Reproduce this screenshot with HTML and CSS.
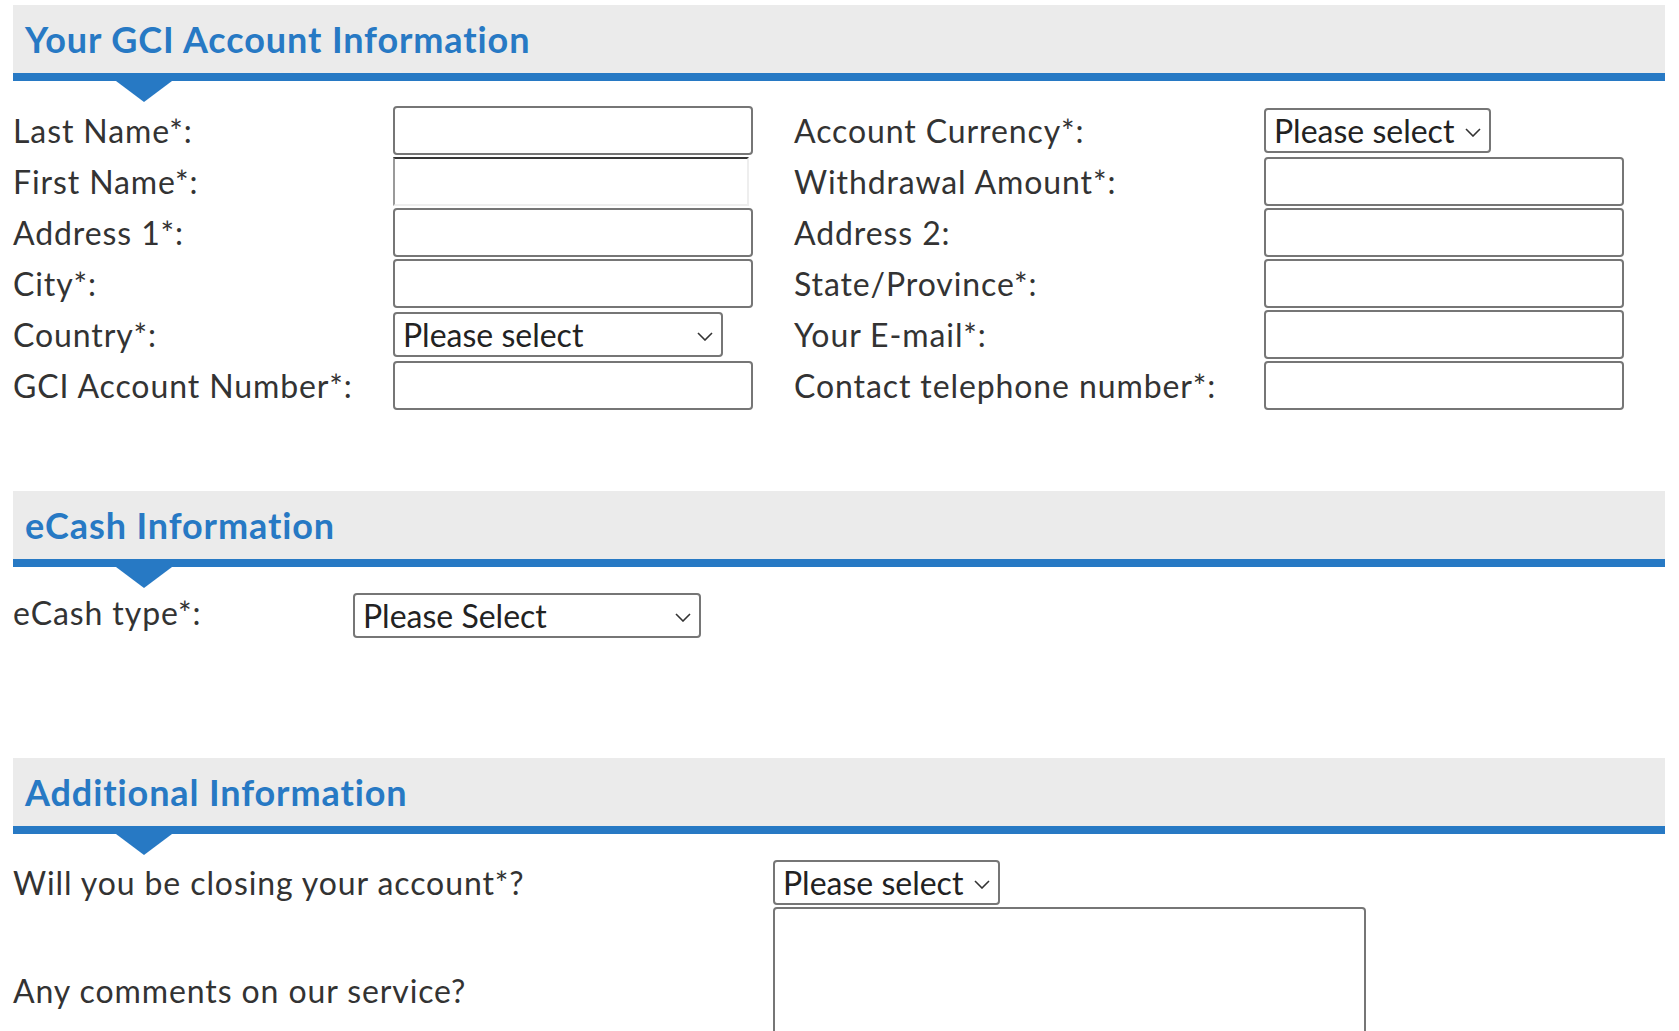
FILE: index.html
```html
<!DOCTYPE html>
<html lang="en">
<head>
    <meta charset="UTF-8">
    <meta name="viewport" content="width=device-width, initial-scale=1.0">
    <title>Withdrawal Form</title>
    <link rel="stylesheet" href="styles.css">
</head>
<body>
    <form class="withdraw-form">
        <section class="panel">
            <h2 class="panel-title">Your GCI Account Information</h2>
            <div class="form-grid account-grid">
                <label>Last Name*:</label>
                <input type="text" class="field">
                <label class="col-label">Account Currency*:</label>
                <span class="select-wrap">
                    <select class="field select-short">
                        <option>Please select</option>
                    </select>
                    <svg class="chevron" viewBox="0 0 16 9"><path d="M1 1l7 7 7-7"/></svg>
                </span>

                <label>First Name*:</label>
                <input type="text" class="field field-inset">
                <label class="col-label">Withdrawal Amount*:</label>
                <input type="text" class="field">

                <label>Address 1*:</label>
                <input type="text" class="field">
                <label class="col-label">Address 2:</label>
                <input type="text" class="field">

                <label>City*:</label>
                <input type="text" class="field">
                <label class="col-label">State/Province*:</label>
                <input type="text" class="field">

                <label>Country*:</label>
                <span class="select-wrap">
                    <select class="field select-country">
                        <option>Please select</option>
                    </select>
                    <svg class="chevron" viewBox="0 0 16 9"><path d="M1 1l7 7 7-7"/></svg>
                </span>
                <label class="col-label">Your E-mail*:</label>
                <input type="text" class="field">

                <label>GCI Account Number*:</label>
                <input type="text" class="field">
                <label class="col-label">Contact telephone number*:</label>
                <input type="text" class="field">
            </div>
        </section>

        <section class="panel panel-ecash">
            <h2 class="panel-title">eCash Information</h2>
            <div class="form-grid ecash-grid">
                <label class="label-top">eCash type*:</label>
                <span class="select-wrap">
                    <select class="field select-ecash">
                        <option>Please Select</option>
                    </select>
                    <svg class="chevron" viewBox="0 0 16 9"><path d="M1 1l7 7 7-7"/></svg>
                </span>
            </div>
        </section>

        <section class="panel panel-extra">
            <h2 class="panel-title">Additional Information</h2>
            <div class="form-grid extra-grid">
                <label>Will you be closing your account*?</label>
                <span class="select-wrap">
                    <select class="field select-short">
                        <option>Please select</option>
                    </select>
                    <svg class="chevron" viewBox="0 0 16 9"><path d="M1 1l7 7 7-7"/></svg>
                </span>

                <label>Any comments on our service?</label>
                <textarea class="field comments"></textarea>
            </div>
        </section>
    </form>
</body>
</html>
```

FILE: styles.css
```css
body {
    margin: 0;
    padding: 5px 14px 0 13px;
    font-family: Lato, "Open Sans", Arial, sans-serif;
    font-size: 32px;
    color: #333;
    background: #fff;
    overflow: hidden;
}
.panel-title {
    position: relative;
    margin: 0;
    height: 68px;
    line-height: 68px;
    padding-left: 12px;
    background: #ebebeb;
    border-bottom: 8px solid #2779c4;
    color: #2779c4;
    font-size: 36px;
    font-weight: 700;
    letter-spacing: 0.9px;
}
/* little pointer under the blue bar */
.panel-title::after {
    content: "";
    position: absolute;
    left: 103px;
    bottom: -29px;
    border-left: 28px solid transparent;
    border-right: 28px solid transparent;
    border-top: 21px solid #2779c4;
}
.form-grid {
    display: grid;
    align-items: center;
    row-gap: 2px;
    margin-top: 25px;
}
.account-grid {
    grid-template-columns: 380px 401px 470px 360px;
    grid-auto-rows: 49px;
}
.ecash-grid {
    grid-template-columns: 340px auto;
    grid-auto-rows: 45px;
    margin-top: 26px;
}
.extra-grid {
    grid-template-columns: 760px auto;
    grid-template-rows: 45px 166px;
    margin-top: 26px;
}
.panel-ecash {
    margin-top: 81px;
}
.panel-extra {
    margin-top: 120px;
}
label {
    white-space: nowrap;
    letter-spacing: 0.9px;
}
.label-top {
    align-self: start;
    line-height: 40px;
}
.field {
    box-sizing: border-box;
    width: 360px;
    height: 49px;
    margin: 0;
    padding: 0 8px;
    border: 2px solid #767676;
    border-radius: 4px;
    background: #fff;
    font-family: inherit;
    font-size: 32px;
    color: #222;
}
.field-inset {
    width: 356px;
    border: 2px inset #eee;
    border-top-color: #8a8a8a;
    border-radius: 0;
}
.select-wrap {
    position: relative;
    display: inline-flex;
    justify-self: start;
}
select.field {
    -webkit-appearance: none;
    appearance: none;
    height: 45px;
    padding: 0 30px 0 8px;
}
.chevron {
    position: absolute;
    right: 10px;
    top: 50%;
    width: 16px;
    height: 9px;
    margin-top: -3px;
    fill: none;
    stroke: #333;
    stroke-width: 1.6;
    pointer-events: none;
}
.select-country {
    width: 330px;
    height: 46px;
}
.select-short {
    width: 227px;
}
.select-ecash {
    width: 348px;
}
.comments {
    width: 593px;
    height: 166px;
    align-self: start;
    resize: none;
}
```
